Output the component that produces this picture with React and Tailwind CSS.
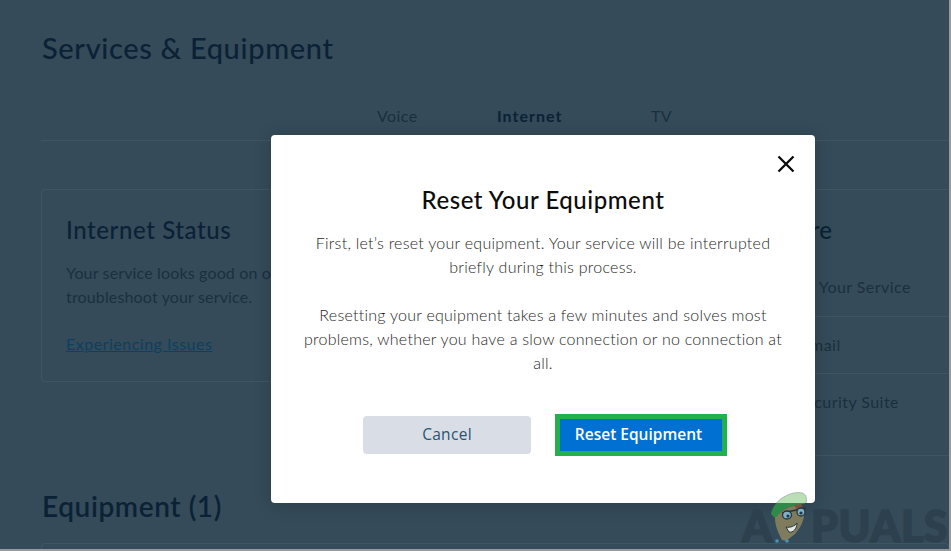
import React from "react";

const font = { fontFamily: "Lato, 'Open Sans', sans-serif" };
const hat = "M771 514 C772 507 778 500 784 497 C790 493 798 492 802 493 C806 494 807 498 806 503 L800 505 C792 505 785 508 781 512 L776 519 Z";

function Mascot() {
  return (
    <svg className="absolute left-[760px] top-[490px]" width="60" height="61" viewBox="760 490 60 61">
      <defs>
        <clipPath id="above"><rect x="760" y="490" width="60" height="13" /></clipPath>
        <clipPath id="below"><rect x="760" y="503" width="60" height="48" /></clipPath>
      </defs>
      <path d={hat} fill="#b9e0b4" stroke="#a8b5ad" strokeWidth="1" clipPath="url(#above)" />
      <path d={hat} fill="#2f8a4a" clipPath="url(#below)" />
      <path d="M775 518 L781 512 C786 507 795 505 801 505 L804 512 C805 520 800 528 795 534 L786 541 L782 540 C778 533 775 525 775 518 Z" fill="#7f7c5e" />
      <path d="M794 505 L801 504 L804 511 L797 510 Z" fill="#7a5240" />
      <path d="M782 513 L806 508" stroke="#26343d" strokeWidth="1.500" />
      <ellipse cx="787" cy="515" rx="4.500" ry="4" fill="#7fb0c6" stroke="#26343d" strokeWidth="1.300" />
      <ellipse cx="801" cy="512" rx="4" ry="4" fill="#7fb0c6" stroke="#26343d" strokeWidth="1.300" />
      <circle cx="788" cy="516" r="1.600" fill="#1f3644" />
      <circle cx="801" cy="513" r="1.600" fill="#1f3644" />
      <path d="M786 527 C790 528 795 526 797 523 C797 529 793 533 789 532 Z" fill="#e4e8e4" stroke="#26343d" strokeWidth="1" />
      <circle cx="777" cy="541" r="1.800" fill="#3f96b5" />
      <circle cx="787" cy="541" r="1.800" fill="#3f96b5" />
    </svg>
  );
}

export default function App() {
  return (
    <div className="relative w-[951px] h-[551px] overflow-hidden bg-[#9a9a9a]" style={font}>
      <div className="w-[949px] h-[549px] overflow-hidden bg-[#354b59] text-[#0f2537]">
        <h1 className="pl-[42px] pt-[30px] text-[29px] leading-[36px] font-medium tracking-[0.65px] text-[#0b2236]">
          Services &amp; Equipment
        </h1>
        <div className="mt-[38px] ml-[41px] h-[37px] border-b border-[#3d5666] flex text-[16px] leading-[24px] pl-[336px] tracking-[0.4px]">
          <span className="w-[120px] text-[#1a3040]">Voice</span>
          <span className="w-[154px] font-bold text-[#0b2236] tracking-[1px]">Internet</span>
          <span className="text-[#1a3040]">TV</span>
        </div>
        <div className="mt-[48px] ml-[41px] flex gap-[24px]">
          <div className="w-[663px] shrink-0 h-[193px] border border-[#3d5666] rounded-[4px] pl-[24px] pt-[24px]">
            <h2 className="text-[24px] leading-[32px] font-medium tracking-[0.6px] text-[#0b2236]">Internet Status</h2>
            <p className="mt-[15px] text-[16px] leading-[24px] text-[#1a3040] tracking-[0.15px]">
              Your service looks good on our end. Use our tools to
              <br />
              troubleshoot your service.
            </p>
            <a className="block mt-[23px] text-[16px] leading-[24px] underline text-[#0d3f60] tracking-[0.5px]">Experiencing Issues</a>
          </div>
          <div className="w-[300px] shrink-0 border-t border-[#3d5666]">
            <h2 className="pl-[24px] pt-[24px] text-[24px] leading-[32px] font-medium text-[#0b2236]">Explore</h2>
            <div className="mt-[15px] pl-[28px] h-[56px] border-b border-[#3d5666] text-[16px] leading-[24px] text-[#1a3040] tracking-[0.45px] pt-[14px]">
              Manage Your Service
            </div>
            <div className="pl-[22px] h-[57px] border-b border-[#3d5666] text-[16px] leading-[24px] text-[#1a3040] tracking-[0.45px] pt-[16px]">
              Check Email
            </div>
            <div className="pl-[6px] h-[82px] border-b border-[#3d5666] text-[16px] leading-[24px] text-[#1a3040] tracking-[0.45px] pt-[16px]">
              McAfee Security Suite
            </div>
          </div>
        </div>
        <h2 className="mt-[32px] pl-[42px] text-[28px] leading-[36px] font-semibold tracking-[0.6px] text-[#0b2236]">Equipment (1)</h2>
        <div className="mt-[19px] ml-[41px] h-[20px] border border-[#3d5666] rounded-[4px]" />
      </div>

      {/* modal */}
      <div className="absolute left-[271px] top-[135px] w-[544px] h-[368px] bg-white rounded-[4px] shadow-[0_2px_18px_rgba(0,0,0,0.18)] flex flex-col items-center">
        <button className="absolute right-[20px] top-[20px] w-[18px] h-[18px]">
          <svg width="18" height="18" viewBox="0 0 18 18" fill="none" stroke="#0a0a0a" strokeWidth="2.3">
            <path d="M1.500 1.500 L16.500 16.500 M16.500 1.500 L1.500 16.500" />
          </svg>
        </button>
        <h2 className="mt-[49px] text-[24px] leading-[32px] font-medium tracking-[0.55px] text-[#0c0c0c]">Reset Your Equipment</h2>
        <p className="mt-[15px] w-[520px] text-center text-[16px] leading-[24px] font-light text-[#1f1f1f] tracking-[0.25px]">
          First, let’s reset your equipment. Your service will be interrupted
          <br />
          briefly during this process.
        </p>
        <p className="mt-[24px] w-[520px] text-center text-[16px] leading-[24px] font-light text-[#1f1f1f] tracking-[0.25px]">
          Resetting your equipment takes a few minutes and solves most
          <br />
          problems, whether you have a slow connection or no connection at
          <br />
          all.
        </p>
        <div className="mt-[39px] flex items-center gap-[24px] pl-[4px]">
          <button className="w-[168px] h-[38px] rounded-[4px] bg-[#d9dde6] text-[15.5px] text-[#2a5370] tracking-[0.3px]" style={{ fontFamily: "'Open Sans', sans-serif" }}>
            Cancel
          </button>
          <button className="w-[172px] h-[42px] border-[5px] border-[#22b14c] bg-[#0070d2] text-white font-semibold text-[15.5px] pr-[5px]" style={{ fontFamily: "'Open Sans', sans-serif" }}>
            Reset Equipment
          </button>
        </div>
      </div>

      {/* watermark */}
      <div className="absolute left-[742px] top-[498px] text-[43px] leading-[56px] font-black text-[#2c404d] [-webkit-text-stroke:1.5px_#2c404d]">A</div>
      <div className="absolute left-[811px] top-[498px] text-[43px] leading-[56px] font-black text-[#2c404d] tracking-[0.5px] [-webkit-text-stroke:1.5px_#2c404d]">PUALS</div>
      <Mascot />
    </div>
  );
}
